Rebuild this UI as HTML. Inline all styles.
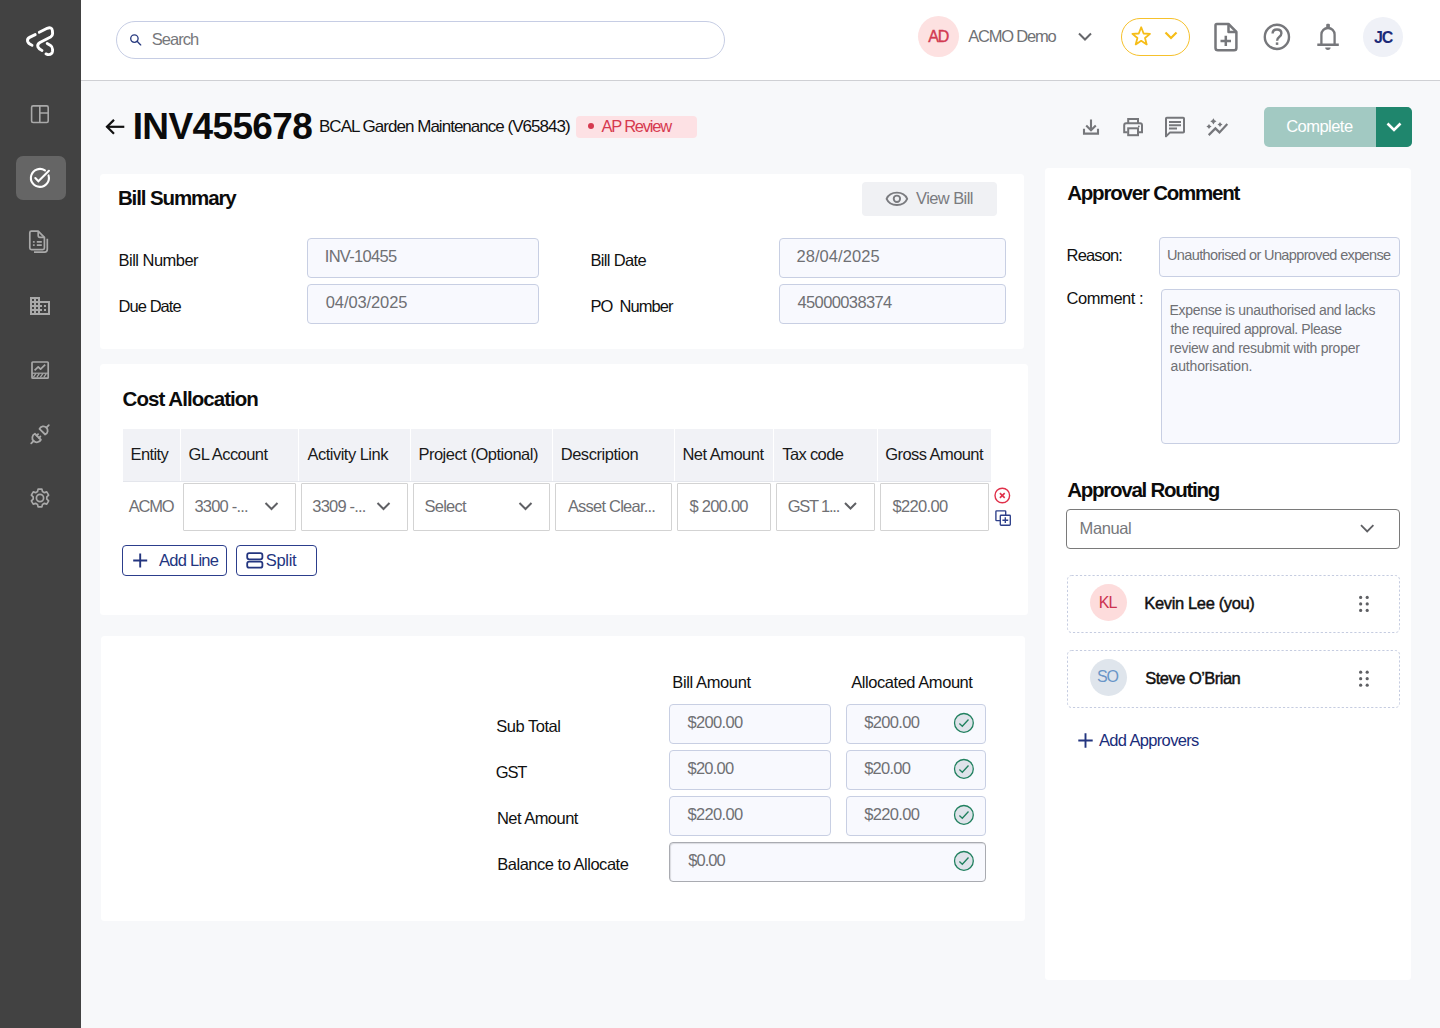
<!DOCTYPE html>
<html><head><meta charset="utf-8">
<style>
*{box-sizing:border-box}
html,body{margin:0;padding:0}
body{width:1440px;height:1028px;overflow:hidden;position:relative;background:#f7f8fa;font-family:"Liberation Sans",sans-serif;color:#111}
.a{position:absolute}
.t{position:absolute;white-space:nowrap;line-height:1;font-size:16px;letter-spacing:-0.3px}
.sb{left:0;top:0;width:81px;height:1028px;background:#424242}
.hdr{left:81px;top:0;width:1359px;height:81px;background:#fff;border-bottom:1px solid #cfd0d4}
.card{background:#fff;border-radius:3.5px}
.h2{font-size:20px;font-weight:700;letter-spacing:-0.55px;color:#0c0c0c}
.inp{position:absolute;background:#f8f9fe;border:1px solid #c8cfe3;border-radius:4px}
.gray{color:#7a7a7a}
svg{position:absolute;overflow:visible}
</style></head><body>

<!-- SIDEBAR -->
<div class="a sb"></div>
<svg style="left:0;top:0" width="1" height="1"><g fill="none" stroke="#fff" stroke-width="2.9" stroke-linecap="round" stroke-linejoin="round">
<path d="M35.2 34.6 L29.6 37.4 Q27 38.8 27.6 41.4 Q28.2 43.6 32 45.3"/>
<path d="M39.3 32.3 L47.2 28.3 Q51.8 26.6 52.4 30.6 L52.6 33.8 Q52.6 35.8 50.6 37 L39.9 42.5 Q37 44.2 37.9 46.9 Q38.8 49 42 50.5"/>
<path d="M47.2 43.5 L50.5 45.4 Q52.6 46.8 52.6 49.4 L52.5 51.4 Q52 55 47.8 54.6 L46 53.9"/>
</g></svg>
<div class="a" style="left:16px;top:156px;width:50px;height:44px;border-radius:7px;background:#656565"></div>
<svg style="left:0;top:0" width="1" height="1">
<g fill="none" stroke="#a9a9a9" stroke-width="1.6">
<rect x="31.6" y="105.9" width="16.6" height="16.6" rx="1.5"/><path d="M39.8 105.9 V122.5 M39.8 113 H48.2"/>
</g>
<g fill="none" stroke="#fff" stroke-width="2.1" stroke-linecap="round">
<path d="M48.55 175.42 A9 9 0 1 1 44.93 170.44"/><path d="M35.3 178 L38.4 181.2 L48.9 170.8"/>
</g>
<g fill="none" stroke="#a9a9a9" stroke-width="1.7" stroke-linejoin="round">
<path d="M31.4 231.1 H38.2 L44.4 237.3 V248 Q44.4 249.6 42.8 249.6 H31.4 Q29.8 249.6 29.8 248 V232.7 Q29.8 231.1 31.4 231.1Z"/>
<path d="M38.2 231.1 V235.6 Q38.2 237.3 39.9 237.3 H44.4"/>
<path d="M47.3 238.8 V249.3 Q47.3 252.1 44.5 252.1 H34"/>
<path d="M36.8 241.9 H41.8 M36.8 245.1 H41.8" stroke-width="1.6"/>
</g>
<g fill="#a9a9a9"><rect x="32.9" y="241.1" width="1.8" height="1.6"/><rect x="32.9" y="244.3" width="1.8" height="1.6"/></g>
<path transform="translate(28,294)" fill="#a9a9a9" fill-rule="evenodd" d="M12 7V3H2v18h20V7H12zM6 19H4v-2h2v2zm0-4H4v-2h2v2zm0-4H4V9h2v2zm0-4H4V5h2v2zm4 12H8v-2h2v2zm0-4H8v-2h2v2zm0-4H8V9h2v2zm0-4H8V5h2v2zm10 12h-8v-2h2v-2h-2v-2h2v-2h-2V9h8v10zm-2-8h-2v2h2v-2zm0 4h-2v2h2v-2z"/>
<g fill="none" stroke="#a9a9a9" stroke-width="1.7">
<rect x="32" y="362" width="16.2" height="16.2" rx="0.8"/>
<path d="M34.6 370.4 L38.2 366.8 L40.6 369.2 L45.2 364.6" stroke-linejoin="round"/>
<path d="M33.4 377.2 L35.8 373.6 M36.9 377.2 L39.3 373.6 M40.4 377.2 L42.8 373.6 M43.9 377.2 L46.3 373.6" stroke-width="1.2"/>
<path d="M32 373.2 H48.2" stroke-width="1.2"/>
</g>
<g fill="none" stroke="#a9a9a9" stroke-width="1.8" stroke-linecap="round" stroke-linejoin="round">
<path d="M34.86 433.74 A4.5 4.5 0 1 0 40.86 439.74 Z"/><path d="M36.73 435.61 L38.1 434.2 M38.99 437.87 L40.4 436.5 M33.6 441 L31.2 443.4"/>
<path d="M39.49 428.81 A4.3 4.3 0 1 1 45.19 434.51 Z"/><path d="M46.44 427.56 L48.8 425.2"/>
</g>
<g fill="none" stroke="#a9a9a9" stroke-width="1.7">
<circle cx="40" cy="498" r="3.6"/>
<path d="M37.53 491.56 L38.11 489.10 L41.89 489.10 L42.47 491.56 L44.34 492.64 L46.76 491.91 L48.65 495.19 L46.82 496.92 L46.82 499.08 L48.65 500.81 L46.76 504.09 L44.34 503.36 L42.47 504.44 L41.89 506.90 L38.11 506.90 L37.53 504.44 L35.66 503.36 L33.24 504.09 L31.35 500.81 L33.18 499.08 L33.18 496.92 L31.35 495.19 L33.24 491.91 L35.66 492.64Z" stroke-linejoin="round"/>
</g>
</svg>

<!-- HEADER -->
<div class="a hdr"></div>
<div class="a" style="left:116px;top:21px;width:609px;height:38px;border:1px solid #c6cde4;border-radius:19px;background:#fff"></div>
<svg style="left:0;top:0" width="1" height="1"><g fill="none" stroke="#2a3c80" stroke-width="1.35"><circle cx="134.4" cy="38.6" r="3.7"/><path d="M137.1 41.3 L140.7 44.9" stroke-linecap="round"/></g></svg>

<div class="a" style="left:918px;top:16px;width:41px;height:41px;border-radius:50%;background:#fde1e1"></div>
<svg style="left:0;top:0" width="1" height="1"><path d="M1079 33.5 L1085 39.5 L1091 33.5" fill="none" stroke="#66676b" stroke-width="2"/></svg>

<div class="a" style="left:1121px;top:18px;width:69px;height:38px;border:1.5px solid #f6c12c;border-radius:19px"></div>
<svg style="left:0;top:0" width="1" height="1"><path d="M1141.2 27.3 L1143.6 33.5 L1150 33.9 L1145 38 L1146.7 44.4 L1141.2 40.8 L1135.7 44.4 L1137.4 38 L1132.4 33.9 L1138.8 33.5 Z" fill="none" stroke="#f6bd17" stroke-width="1.8" stroke-linejoin="round"/>
<path d="M1165.5 32.5 L1171 38 L1176.5 32.5" fill="none" stroke="#f6bd17" stroke-width="2.2"/></svg>

<svg style="left:0;top:0" width="1" height="1"><g fill="none" stroke="#76777b" stroke-width="2.5" stroke-linejoin="round"><path d="M1216.8 24 H1228.5 L1236.4 31.9 V48 Q1236.4 50.3 1234.1 50.3 H1218 Q1215.5 50.3 1215.5 48 V25.3 Q1215.5 24 1216.8 24 Z"/><path d="M1228.5 24 V31.9 H1236.4"/><path d="M1220.5 40.9 H1231 M1225.8 35.7 V46.1"/></g></svg>

<svg style="left:0;top:0" width="1" height="1"><g fill="none" stroke="#76777b" stroke-width="2.4"><circle cx="1276.9" cy="36.9" r="12.1"/><path d="M1272.6 33.6 Q1272.6 29.5 1277 29.5 Q1281.4 29.5 1281.4 33.3 Q1281.4 35.4 1279.2 37 Q1277.1 38.6 1277.1 40.8" stroke-linecap="butt"/></g><rect x="1275.8" y="42.4" width="2.5" height="2.5" fill="#76777b"/></svg>

<svg style="left:0;top:0" width="1" height="1"><g fill="none" stroke="#76777b" stroke-width="2.3"><path d="M1321.4 44.5 V34.6 A6.6 6.6 0 0 1 1334.6 34.6 V44.5"/></g><g fill="#76777b"><rect x="1317.3" y="43.5" width="21.5" height="2.5"/><rect x="1326.2" y="23.8" width="3.7" height="4" rx="1.2"/><path d="M1325.2 47.6 H1330.6 A2.7 2.3 0 0 1 1325.2 47.6 Z"/></g></svg>

<div class="a" style="left:1363px;top:17px;width:40px;height:40px;border-radius:50%;background:#eff1f7"></div>

<!-- TITLE ROW -->
<svg style="left:0;top:0" width="1" height="1"><g fill="none" stroke="#111" stroke-width="2.2"><path d="M106.8 126.8 H124.3"/><path d="M113.2 120.6 L107 126.8 L113.2 133" stroke-linecap="square"/></g></svg>
<div class="a" style="left:576px;top:116px;width:121px;height:22px;border-radius:4px;background:#fde1e4"></div>
<div class="a" style="left:588px;top:123px;width:6px;height:6px;border-radius:50%;background:#d6394f"></div>

<svg style="left:0;top:0" width="1" height="1"><g fill="none" stroke="#76777b" stroke-width="2.1">
<path d="M1091 119.5 V130 M1086.2 125.4 L1091 130.2 L1095.8 125.4"/><path d="M1084 128.8 V133.6 H1098 V128.8"/>
</g>
<g fill="none" stroke="#76777b" stroke-width="2">
<path d="M1128.2 123.3 V119 H1138 V123.3"/><path d="M1127.5 132.2 H1124.2 V125.2 Q1124.2 123.3 1126.1 123.3 H1140.1 Q1142 123.3 1142 125.2 V132.2 H1138.6"/><rect x="1128.2" y="128.3" width="9.8" height="6.9"/>
</g><circle cx="1138.8" cy="126.4" r="0.9" fill="#76777b"/>
<g fill="none" stroke="#76777b" stroke-width="2">
<path d="M1166 136.4 V118.6 Q1166 117.8 1166.8 117.8 H1183.2 Q1184 117.8 1184 118.6 V131.8 Q1184 132.6 1183.2 132.6 H1169.8 Z" stroke-linejoin="round"/>
<path d="M1169 122 H1181 M1169 125.2 H1181 M1169 128.4 H1177"/>
</g>
<g fill="none" stroke="#76777b" stroke-width="2.2" stroke-linejoin="miter"><path d="M1208.7 135.1 L1215.4 128.4 L1219.5 132.4 L1227.3 124.1"/></g>
<g fill="#76777b"><path d="M1213.4 118.2 Q1214.268 120.432 1216.5 121.3 Q1214.268 122.16799999999999 1213.4 124.39999999999999 Q1212.5320000000002 122.16799999999999 1210.3000000000002 121.3 Q1212.5320000000002 120.432 1213.4 118.2Z"/><path d="M1209 123.9 Q1209.728 125.772 1211.6 126.5 Q1209.728 127.228 1209 129.1 Q1208.272 127.228 1206.4 126.5 Q1208.272 125.772 1209 123.9Z"/><path d="M1220 122.1 Q1220.7 123.89999999999999 1222.5 124.6 Q1220.7 125.3 1220 127.1 Q1219.3 125.3 1217.5 124.6 Q1219.3 123.89999999999999 1220 122.1Z"/></g>
</svg>

<div class="a" style="left:1264px;top:107px;width:148px;height:40px;border-radius:5px;background:#a2c9c2;overflow:hidden"><div class="a" style="left:112px;top:0;width:36px;height:40px;background:#1f866d"></div></div>
<svg style="left:0;top:0" width="1" height="1"><path d="M1387.5 123.5 L1394 130 L1400.5 123.5" fill="none" stroke="#fff" stroke-width="2.6"/></svg>

<!-- CARDS -->
<div class="a card" style="left:100px;top:174px;width:924px;height:175px"></div>
<div class="a card" style="left:100px;top:364px;width:928px;height:251px"></div>
<div class="a card" style="left:101px;top:636px;width:924px;height:285px"></div>
<div class="a card" style="left:1045px;top:168px;width:366px;height:812px"></div>

<!-- BILL SUMMARY -->
<div class="a" style="left:862px;top:182px;width:135px;height:34px;border-radius:4px;background:#f0f1f4"></div>
<svg style="left:0;top:0" width="1" height="1"><g fill="none" stroke="#7a7b7f" stroke-width="1.9"><path d="M886.6 198.8 C890.2 190.6 903.6 190.6 907.2 198.8 C903.6 207 890.2 207 886.6 198.8 Z" stroke-linejoin="round"/><circle cx="896.9" cy="198.8" r="3.2"/></g></svg>


<div class="inp" style="left:307px;top:238px;width:232px;height:40px"></div>
<div class="inp" style="left:307px;top:284px;width:232px;height:40px"></div>
<div class="inp" style="left:779px;top:238px;width:227px;height:40px"></div>
<div class="inp" style="left:779px;top:284px;width:227px;height:40px"></div>

<!-- COST ALLOCATION -->
<div class="a" style="left:123px;top:429px;width:57px;height:52px;background:#f1f2f6"></div>
<div class="a" style="left:181px;top:429px;width:117px;height:52px;background:#f1f2f6"></div>
<div class="a" style="left:299px;top:429px;width:111px;height:52px;background:#f1f2f6"></div>
<div class="a" style="left:411px;top:429px;width:141px;height:52px;background:#f1f2f6"></div>
<div class="a" style="left:553px;top:429px;width:121px;height:52px;background:#f1f2f6"></div>
<div class="a" style="left:675px;top:429px;width:98px;height:52px;background:#f1f2f6"></div>
<div class="a" style="left:774px;top:429px;width:103px;height:52px;background:#f1f2f6"></div>
<div class="a" style="left:878px;top:429px;width:113px;height:52px;background:#f1f2f6"></div>
<div class="a" style="left:123px;top:481px;width:868px;height:1px;background:#e4e6ec"></div>

<div class="a" style="left:183px;top:483px;width:113px;height:48px;border:1px solid #d3d3d3;border-radius:1px;background:#fff"></div>
<div class="a" style="left:301px;top:483px;width:107px;height:48px;border:1px solid #d3d3d3;border-radius:1px;background:#fff"></div>
<div class="a" style="left:413px;top:483px;width:137px;height:48px;border:1px solid #d3d3d3;border-radius:1px;background:#fff"></div>
<div class="a" style="left:555px;top:483px;width:117px;height:48px;border:1px solid #d3d3d3;border-radius:1px;background:#fff"></div>
<div class="a" style="left:677px;top:483px;width:94px;height:48px;border:1px solid #d3d3d3;border-radius:1px;background:#fff"></div>
<div class="a" style="left:776px;top:483px;width:99px;height:48px;border:1px solid #d3d3d3;border-radius:1px;background:#fff"></div>
<div class="a" style="left:880px;top:483px;width:109px;height:48px;border:1px solid #d3d3d3;border-radius:1px;background:#fff"></div>
<svg style="left:0;top:0" width="1" height="1"><g fill="none" stroke="#5f6064" stroke-width="2">
<path d="M265.5 503 L271.5 509 L277.5 503"/><path d="M377.5 503 L383.5 509 L389.5 503"/><path d="M519.5 503 L525.5 509 L531.5 503"/><path d="M845 503 L850.5 508.5 L856 503"/>
</g>
<g fill="none" stroke="#e0304a" stroke-width="1.4"><circle cx="1002.3" cy="495.5" r="7.3"/><path d="M999.9 493.1 L1004.7 497.9 M1004.7 493.1 L999.9 497.9" stroke-width="1.6"/></g>
<g fill="none" stroke="#2d3f8a" stroke-width="1.35"><path d="M1000 520.6 H996.6 Q995.9 520.6 995.9 519.9 V511.5 Q995.9 510.8 996.6 510.8 H1005 Q1005.7 510.8 1005.7 511.5 V515.2"/><rect x="1000.3" y="515.2" width="10" height="10" rx="0.8"/><path d="M1005.3 517.3 V523.1 M1002.4 520.2 H1008.2"/></g>
</svg>

<div class="a" style="left:122px;top:545px;width:105px;height:31px;border:1.3px solid #2c3e8c;border-radius:4px"></div>
<div class="a" style="left:236px;top:545px;width:81px;height:31px;border:1.3px solid #2c3e8c;border-radius:4px"></div>
<svg style="left:0;top:0" width="1" height="1"><g fill="none" stroke="#23357f" stroke-width="1.9"><path d="M133.2 560.5 H147.2 M140.2 553.5 V567.5"/></g>
<g fill="none" stroke="#23357f" stroke-width="1.8"><rect x="247.2" y="553.2" width="15.2" height="6.1" rx="2"/><rect x="247.2" y="561.6" width="15.2" height="6.1" rx="2"/></g></svg>

<!-- TOTALS -->
<div class="inp" style="left:669px;top:704px;width:162px;height:40px"></div>
<div class="inp" style="left:669px;top:750px;width:162px;height:40px"></div>
<div class="inp" style="left:669px;top:796px;width:162px;height:40px"></div>
<div class="inp" style="left:846px;top:704px;width:140px;height:40px"></div>
<div class="inp" style="left:846px;top:750px;width:140px;height:40px"></div>
<div class="inp" style="left:846px;top:796px;width:140px;height:40px"></div>
<div class="inp" style="left:669px;top:842px;width:317px;height:40px;border-color:#a9abb1;box-shadow:inset 1px 1px 1px rgba(0,0,0,0.12)"></div>
<svg style="left:0;top:0" width="1" height="1">
<g transform="translate(963.9,722.9)"><circle cx="0" cy="0" r="9.4" fill="#dfe3ea" stroke="#21805f" stroke-width="1.3"/><path d="M-4.5 0.7 L-1.6 3.3 L4.6 -3.4" fill="none" stroke="#21805f" stroke-width="1.35"/></g><g transform="translate(963.9,768.9)"><circle cx="0" cy="0" r="9.4" fill="#dfe3ea" stroke="#21805f" stroke-width="1.3"/><path d="M-4.5 0.7 L-1.6 3.3 L4.6 -3.4" fill="none" stroke="#21805f" stroke-width="1.35"/></g><g transform="translate(963.9,814.9)"><circle cx="0" cy="0" r="9.4" fill="#dfe3ea" stroke="#21805f" stroke-width="1.3"/><path d="M-4.5 0.7 L-1.6 3.3 L4.6 -3.4" fill="none" stroke="#21805f" stroke-width="1.35"/></g><g transform="translate(963.9,860.9)"><circle cx="0" cy="0" r="9.4" fill="#dfe3ea" stroke="#21805f" stroke-width="1.3"/><path d="M-4.5 0.7 L-1.6 3.3 L4.6 -3.4" fill="none" stroke="#21805f" stroke-width="1.35"/></g></svg>

<!-- RIGHT PANEL -->
<div class="inp" style="left:1159px;top:236.5px;width:241px;height:40px"></div>
<div class="inp" style="left:1161px;top:288.5px;width:239px;height:155px"></div>

<div class="a" style="left:1066px;top:509px;width:334px;height:40px;border:1px solid #7a7a7a;border-radius:4px;background:#fff"></div>
<svg style="left:0;top:0" width="1" height="1"><path d="M1361 525.2 L1367.2 531.4 L1373.4 525.2" fill="none" stroke="#5f6064" stroke-width="1.8"/></svg>

<svg style="left:0;top:0" width="1" height="1"><g fill="none" stroke="#c5cce0" stroke-width="1" stroke-dasharray="2.2 2"><rect x="1067.5" y="575.5" width="332" height="57" rx="4"/><rect x="1067.5" y="650.5" width="332" height="57" rx="4"/></g></svg>
<div class="a" style="left:1089.5px;top:583.5px;width:37px;height:37px;border-radius:50%;background:#fddcdc"></div>
<div class="a" style="left:1089.5px;top:658.5px;width:37px;height:37px;border-radius:50%;background:#dfe5ec"></div>
<svg style="left:0;top:0" width="1" height="1">
<g fill="#5f6064" transform="translate(1360.65,597.4)"><circle cx="0" cy="0" r="1.6"/><circle cx="6.55" cy="0" r="1.6"/><circle cx="0" cy="6.5" r="1.6"/><circle cx="6.55" cy="6.5" r="1.6"/><circle cx="0" cy="13" r="1.6"/><circle cx="6.55" cy="13" r="1.6"/></g><g fill="#5f6064" transform="translate(1360.65,672.2)"><circle cx="0" cy="0" r="1.6"/><circle cx="6.55" cy="0" r="1.6"/><circle cx="0" cy="6.5" r="1.6"/><circle cx="6.55" cy="6.5" r="1.6"/><circle cx="0" cy="13" r="1.6"/><circle cx="6.55" cy="13" r="1.6"/></g>
<path d="M1078.3 740.5 H1092.7 M1085.5 733.3 V747.7" fill="none" stroke="#23357f" stroke-width="1.9"/></svg>


<!-- TEXT -->
<div class="t" style="left:151.70px;top:31px;font-size:16.5px;font-weight:400;color:#76777b;letter-spacing:-0.940px;">Search</div>
<div class="t" style="left:928.33px;top:29px;font-size:16px;font-weight:400;color:#d23a52;letter-spacing:-1.200px;-webkit-text-stroke:0.4px #d23a52">AD</div>
<div class="t" style="left:968.30px;top:28px;font-size:16.5px;font-weight:400;color:#707174;letter-spacing:-1.225px;">ACMO Demo</div>
<div class="t" style="left:1374.00px;top:30px;font-size:16px;font-weight:700;color:#1c2a78;letter-spacing:-1.100px;">JC</div>
<div class="t" style="left:132.70px;top:108px;font-size:37px;font-weight:700;color:#0b0b0b;letter-spacing:-0.625px;">INV455678</div>
<div class="t" style="left:319.00px;top:118px;font-size:17px;font-weight:400;color:#111111;letter-spacing:-0.977px;">BCAL Garden Maintenance (V65843)</div>
<div class="t" style="left:601.60px;top:118px;font-size:16.5px;font-weight:400;color:#d6394f;letter-spacing:-1.238px;">AP Review</div>
<div class="t" style="left:1286.20px;top:118px;font-size:16.5px;font-weight:400;color:#ffffff;letter-spacing:-0.529px;">Complete</div>
<div class="t" style="left:117.90px;top:188px;font-size:20.5px;font-weight:700;color:#0c0c0c;letter-spacing:-1.109px;">Bill Summary</div>
<div class="t" style="left:916.00px;top:190px;font-size:16.5px;font-weight:400;color:#7a7b7f;letter-spacing:-0.575px;">View Bill</div>
<div class="t" style="left:118.50px;top:252px;font-size:16.5px;font-weight:400;color:#111111;letter-spacing:-0.520px;">Bill Number</div>
<div class="t" style="left:118.50px;top:298px;font-size:16.5px;font-weight:400;color:#111111;letter-spacing:-0.929px;">Due Date</div>
<div class="t" style="left:590.50px;top:252px;font-size:16.5px;font-weight:400;color:#111111;letter-spacing:-0.656px;">Bill Date</div>
<div class="t" style="left:590.50px;top:298px;font-size:16.5px;font-weight:400;color:#111111;letter-spacing:-0.972px;">PO&nbsp; Number</div>
<div class="t" style="left:324.80px;top:248px;font-size:16.5px;font-weight:400;color:#6f7074;letter-spacing:-0.712px;">INV-10455</div>
<div class="t" style="left:325.80px;top:294px;font-size:16.5px;font-weight:400;color:#6f7074;letter-spacing:-0.111px;">04/03/2025</div>
<div class="t" style="left:796.50px;top:248px;font-size:16.5px;font-weight:400;color:#6f7074;letter-spacing:0.056px;">28/04/2025</div>
<div class="t" style="left:797.50px;top:294px;font-size:16.5px;font-weight:400;color:#6f7074;letter-spacing:-0.620px;">45000038374</div>
<div class="t" style="left:122.60px;top:389px;font-size:20.5px;font-weight:700;color:#0c0c0c;letter-spacing:-0.950px;">Cost Allocation</div>
<div class="t" style="left:130.50px;top:446px;font-size:16.5px;font-weight:400;color:#1a1a1a;letter-spacing:-0.600px;">Entity</div>
<div class="t" style="left:188.40px;top:446px;font-size:16.5px;font-weight:400;color:#1a1a1a;letter-spacing:-0.567px;">GL Account</div>
<div class="t" style="left:307.50px;top:446px;font-size:16.5px;font-weight:400;color:#1a1a1a;letter-spacing:-0.517px;">Activity Link</div>
<div class="t" style="left:418.40px;top:446px;font-size:16.5px;font-weight:400;color:#1a1a1a;letter-spacing:-0.488px;">Project (Optional)</div>
<div class="t" style="left:560.70px;top:446px;font-size:16.5px;font-weight:400;color:#1a1a1a;letter-spacing:-0.460px;">Description</div>
<div class="t" style="left:682.40px;top:446px;font-size:16.5px;font-weight:400;color:#1a1a1a;letter-spacing:-0.511px;">Net Amount</div>
<div class="t" style="left:782.30px;top:446px;font-size:16.5px;font-weight:400;color:#1a1a1a;letter-spacing:-0.643px;">Tax code</div>
<div class="t" style="left:885.30px;top:446px;font-size:16.5px;font-weight:400;color:#1a1a1a;letter-spacing:-0.573px;">Gross Amount</div>
<div class="t" style="left:128.75px;top:498px;font-size:16.5px;font-weight:400;color:#6f7074;letter-spacing:-1.238px;">ACMO</div>
<div class="t" style="left:194.40px;top:498px;font-size:16.5px;font-weight:400;color:#6f7074;letter-spacing:-0.800px;">3300 -...</div>
<div class="t" style="left:312.30px;top:498px;font-size:16.5px;font-weight:400;color:#6f7074;letter-spacing:-0.812px;">3309 -...</div>
<div class="t" style="left:424.60px;top:498px;font-size:16.5px;font-weight:400;color:#6f7074;letter-spacing:-0.780px;">Select</div>
<div class="t" style="left:567.90px;top:498px;font-size:16.5px;font-weight:400;color:#6f7074;letter-spacing:-0.777px;">Asset Clear...</div>
<div class="t" style="left:689.40px;top:498px;font-size:16.5px;font-weight:400;color:#6f7074;letter-spacing:-0.729px;">$ 200.00</div>
<div class="t" style="left:787.75px;top:498px;font-size:16.5px;font-weight:400;color:#6f7074;letter-spacing:-1.238px;">GST 1...</div>
<div class="t" style="left:892.40px;top:498px;font-size:16.5px;font-weight:400;color:#6f7074;letter-spacing:-0.633px;">$220.00</div>
<div class="t" style="left:159.00px;top:552px;font-size:16.5px;font-weight:400;color:#23357f;letter-spacing:-0.743px;">Add Line</div>
<div class="t" style="left:265.80px;top:552px;font-size:16.5px;font-weight:400;color:#23357f;letter-spacing:-0.325px;">Split</div>
<div class="t" style="left:672.30px;top:674px;font-size:16.5px;font-weight:400;color:#111111;letter-spacing:-0.380px;">Bill Amount</div>
<div class="t" style="left:851.30px;top:674px;font-size:16.5px;font-weight:400;color:#111111;letter-spacing:-0.453px;">Allocated Amount</div>
<div class="t" style="left:496.30px;top:718px;font-size:16.5px;font-weight:400;color:#111111;letter-spacing:-0.488px;">Sub Total</div>
<div class="t" style="left:495.85px;top:764px;font-size:16.5px;font-weight:400;color:#111111;letter-spacing:-1.238px;">GST</div>
<div class="t" style="left:496.90px;top:810px;font-size:16.5px;font-weight:400;color:#111111;letter-spacing:-0.522px;">Net Amount</div>
<div class="t" style="left:497.30px;top:856px;font-size:16.5px;font-weight:400;color:#111111;letter-spacing:-0.489px;">Balance to Allocate</div>
<div class="t" style="left:687.50px;top:714px;font-size:16.5px;font-weight:400;color:#6f7074;letter-spacing:-0.667px;">$200.00</div>
<div class="t" style="left:687.50px;top:760px;font-size:16.5px;font-weight:400;color:#6f7074;letter-spacing:-0.750px;">$20.00</div>
<div class="t" style="left:687.50px;top:806px;font-size:16.5px;font-weight:400;color:#6f7074;letter-spacing:-0.667px;">$220.00</div>
<div class="t" style="left:864.20px;top:714px;font-size:16.5px;font-weight:400;color:#6f7074;letter-spacing:-0.667px;">$200.00</div>
<div class="t" style="left:864.20px;top:760px;font-size:16.5px;font-weight:400;color:#6f7074;letter-spacing:-0.750px;">$20.00</div>
<div class="t" style="left:864.20px;top:806px;font-size:16.5px;font-weight:400;color:#6f7074;letter-spacing:-0.667px;">$220.00</div>
<div class="t" style="left:688.30px;top:852px;font-size:16.5px;font-weight:400;color:#6f7074;letter-spacing:-0.975px;">$0.00</div>
<div class="t" style="left:1067.20px;top:183px;font-size:20.5px;font-weight:700;color:#0c0c0c;letter-spacing:-1.207px;">Approver Comment</div>
<div class="t" style="left:1066.60px;top:247px;font-size:16.5px;font-weight:400;color:#111111;letter-spacing:-0.867px;">Reason:</div>
<div class="t" style="left:1066.60px;top:290px;font-size:16.5px;font-weight:400;color:#111111;letter-spacing:-0.450px;">Comment :</div>
<div class="t" style="left:1167.00px;top:248px;font-size:14.5px;font-weight:400;color:#6f7074;letter-spacing:-0.633px;">Unauthorised or Unapproved expense</div>
<div class="t" style="left:1169.60px;top:303px;font-size:14px;font-weight:400;color:#6f7074;letter-spacing:-0.328px;">Expense is unauthorised and lacks</div>
<div class="t" style="left:1170.60px;top:322px;font-size:14px;font-weight:400;color:#6f7074;letter-spacing:-0.407px;">the required approval. Please</div>
<div class="t" style="left:1169.60px;top:341px;font-size:14px;font-weight:400;color:#6f7074;letter-spacing:-0.273px;">review and resubmit with proper</div>
<div class="t" style="left:1170.60px;top:359px;font-size:14px;font-weight:400;color:#6f7074;letter-spacing:-0.169px;">authorisation.</div>
<div class="t" style="left:1067.20px;top:480px;font-size:20.5px;font-weight:700;color:#0c0c0c;letter-spacing:-1.253px;">Approval Routing</div>
<div class="t" style="left:1079.60px;top:520px;font-size:16.5px;font-weight:400;color:#76777b;letter-spacing:-0.400px;">Manual</div>
<div class="t" style="left:1098.70px;top:595px;font-size:16px;font-weight:400;color:#cc3350;letter-spacing:-0.900px;">KL</div>
<div class="t" style="left:1097.00px;top:669px;font-size:16px;font-weight:400;color:#6a96c8;letter-spacing:-1.100px;">SO</div>
<div class="t" style="left:1144.30px;top:595px;font-size:16.5px;font-weight:400;color:#111111;letter-spacing:-0.357px;-webkit-text-stroke:0.45px #111">Kevin Lee (you)</div>
<div class="t" style="left:1145.30px;top:670px;font-size:16.5px;font-weight:400;color:#111111;letter-spacing:-0.525px;-webkit-text-stroke:0.45px #111">Steve O’Brian</div>
<div class="t" style="left:1099.00px;top:732px;font-size:16.5px;font-weight:400;color:#1a2d7a;letter-spacing:-0.658px;">Add Approvers</div>
</body></html>
